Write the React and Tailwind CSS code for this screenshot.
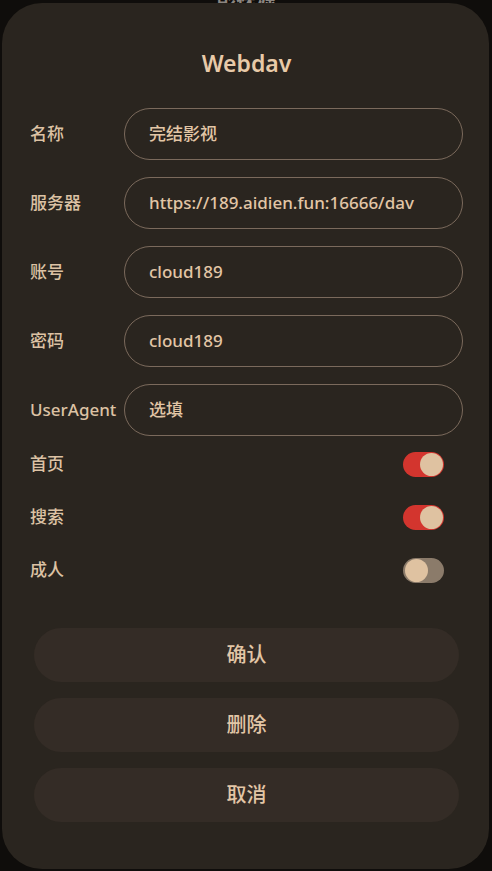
import React from "react";

const FONT = { fontFamily: '"Noto Sans", "Noto Sans CJK SC", sans-serif' };

function Field({ label, value }) {
  return (
    <div className="flex items-center">
      <span className="w-[94px] shrink-0 text-[17px] font-medium text-[#dcc2a4] whitespace-nowrap">{label}</span>
      <div className="flex h-[52px] flex-1 items-center rounded-full border-[1.5px] border-[#7b6a5c] pl-[24px] text-[17px] font-medium text-[#e2c6a6]">
        {value}
      </div>
    </div>
  );
}

function Toggle({ label, on }) {
  return (
    <div className="flex h-[53px] items-center justify-between pr-[19px]">
      <span className="text-[17px] font-medium text-[#dcc2a4]">{label}</span>
      <div
        className={
          on
            ? "flex h-[25px] w-[41px] items-center justify-end rounded-full bg-[#d3352e] px-[1.5px]"
            : "flex h-[25px] w-[41px] items-center justify-start rounded-full bg-[#8b7b6a] px-[1.5px]"
        }
      >
        <div className="h-[23px] w-[23px] rounded-full bg-[#dfc2a1]" />
      </div>
    </div>
  );
}

function Btn({ children }) {
  return (
    <div className="flex h-[54px] items-center justify-center rounded-full bg-[#342c26] text-[20px] font-medium text-[#e2c6a6]">
      {children}
    </div>
  );
}

export default function App() {
  return (
    <div className="relative h-[871px] w-[492px] overflow-hidden bg-[#0f0d0b]" style={FONT}>
      {/* page behind the sheet */}
      <div className="flex justify-center">
        <span className="-mt-[16px] text-[20px] font-semibold text-[#8c8680]">影视源</span>
      </div>
      <div className="absolute left-[2px] right-[3px] top-[3px] bottom-[2px] rounded-[40px] bg-[#2a251f] pl-[28px] pr-[26px] pt-[43px]">
        <h2 className="text-center text-[23px] font-semibold text-[#e8caa8]">Webdav</h2>
        <div className="mt-[27px] flex flex-col gap-[17px]">
          <Field label="名称" value="完结影视" />
          <Field label="服务器" value="https://189.aidien.fun:16666/dav" />
          <Field label="账号" value="cloud189" />
          <Field label="密码" value="cloud189" />
          <Field label="UserAgent" value="选填" />
        </div>
        <div className="mt-[2px] flex flex-col">
          <Toggle label="首页" on />
          <Toggle label="搜索" on />
          <Toggle label="成人" on={false} />
        </div>
        <div className="mt-[31px] flex flex-col gap-[16px] px-[4px]">
          <Btn>确认</Btn>
          <Btn>删除</Btn>
          <Btn>取消</Btn>
        </div>
      </div>
    </div>
  );
}
